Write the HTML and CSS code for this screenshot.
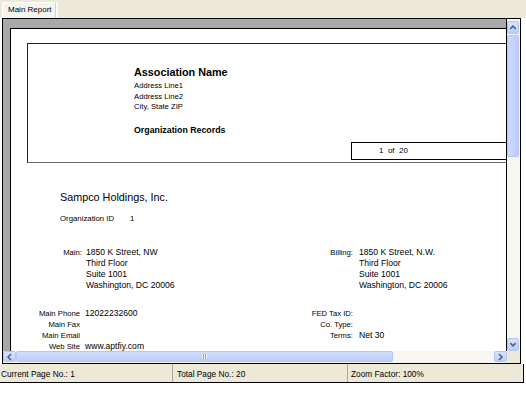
FILE: index.html
```html
<!DOCTYPE html>
<html>
<head>
<meta charset="utf-8">
<link rel="stylesheet" href="styles.css">
</head>
<body>
<div class="app">
  <div class="tabbar"><div class="tab">Main Report</div></div>
  <div class="frame">
    <div class="viewport">
      <div class="page">
        <div class="hdrbox">
          <div class="org-block">
            <div class="assoc">Association Name</div>
            <div class="addr first">Address Line1</div>
            <div class="addr">Address Line2</div>
            <div class="addr">City, State ZIP</div>
            <div class="records">Organization Records</div>
          </div>
          <div class="pager">1  of  20</div>
        </div>
        <div class="company">Sampco Holdings, Inc.</div>
        <div class="orgid"><span class="orgid-label">Organization ID</span><span>1</span></div>
        <div class="addr-grid">
          <div class="lbl">Main:</div>
          <div class="val">1850 K Street, NW<br>Third Floor<br>Suite 1001<br>Washington, DC  20006</div>
          <div class="lbl">Billing:</div>
          <div class="val val-r">1850 K Street, N.W.<br>Third Floor<br>Suite 1001<br>Washington, DC  20006</div>
        </div>
        <div class="contact-grid">
          <div class="lbl">Main Phone</div><div class="val">12022232600</div><div class="lbl">FED Tax ID:</div><div class="val"></div>
          <div class="lbl">Main Fax</div><div class="val"></div><div class="lbl">Co. Type:</div><div class="val"></div>
          <div class="lbl">Main Email</div><div class="val"></div><div class="lbl">Terms:</div><div class="val val-r">Net 30</div>
          <div class="lbl">Web Site</div><div class="val">www.aptfiy.com</div><div class="lbl"></div><div class="val"></div>
        </div>
      </div>
    </div>
    <div class="vscroll">
      <div class="sbtn vbtn up"><svg width="11" height="11" viewBox="0 0 11 11"><path d="M2.5 7 L5.5 4 L8.5 7" fill="none" stroke="#4d6185" stroke-width="1.6"/></svg></div>
      <div class="vthumb"></div>
      <div class="spacer"></div>
      <div class="sbtn vbtn down"><svg width="11" height="11" viewBox="0 0 11 11"><path d="M2.5 4 L5.5 7 L8.5 4" fill="none" stroke="#4d6185" stroke-width="1.6"/></svg></div>
    </div>
    <div class="hscroll">
      <div class="sbtn hbtn"><svg width="11" height="10" viewBox="0 0 11 10"><path d="M7 2 L4 5 L7 8" fill="none" stroke="#4d6185" stroke-width="1.6"/></svg></div>
      <div class="hthumb"><span class="grip"></span></div>
      <div class="spacer"></div>
      <div class="sbtn hbtn"><svg width="11" height="10" viewBox="0 0 11 10"><path d="M4 2 L7 5 L4 8" fill="none" stroke="#4d6185" stroke-width="1.6"/></svg></div>
    </div>
    <div class="corner"></div>
  </div>
  <div class="statusbar">
    <div class="cell c1">Current Page No.: 1</div>
    <div class="cell c2">Total Page No.: 20</div>
    <div class="cell c3">Zoom Factor: 100%</div>
  </div>
</div>
</body>
</html>
```
FILE: styles.css
```css
* { box-sizing: border-box; }
html, body { margin: 0; padding: 0; background: #fff; }
body { font-family: "Liberation Sans", Arial, sans-serif; color: #000; }

.app { width: 526px; height: 396px; background: #fff; }

.tabbar {
  height: 18px;
  background: #ece9d8;
  padding: 2px 0 0 2px;
  display: flex;
}
.tab {
  height: 16px;
  padding: 0 5px 0 5px;
  width: 54px;
  background: #f5f4ef;
  border-top: 1px solid #fff;
  border-left: 1px solid #fff;
  border-right: 1px solid #d6d2c2;
  box-shadow: 2px 0 0 #fbfaf6;
  font-size: 8px;
  line-height: 14px;
  white-space: nowrap;
}

.frame {
  margin-left: 2px;
  width: 519px;
  border: 1px solid #000;
  display: grid;
  grid-template-columns: 504px 13px;
  grid-template-rows: 332px 12px;
  background: #ece9d8;
}

.viewport {
  background: #a9a9a9;
  border-right: 1px solid #000;
  overflow: hidden;
  padding: 9px 0 0 7px;
}
.page {
  width: 600px;
  height: 400px;
  background: #fff;
  border-top: 1px solid #000;
  border-left: 1px solid #000;
  padding-top: 14px;
}

.hdrbox {
  margin-left: 16px;
  width: 520px;
  height: 120px;
  border: 1px solid #222;
  border-bottom-color: #6e6e6e;
}
.org-block { padding: 21px 0 0 106px; }
.assoc { font-size: 10.8px; font-weight: bold; line-height: 14px; }
.addr { font-size: 7.7px; line-height: 10.5px; }
.addr.first { margin-top: 2px; }
.records { font-size: 8.8px; font-weight: bold; line-height: 12px; margin-top: 11.5px; }
.pager {
  margin: 6px 0 0 323px;
  width: 200px;
  height: 18px;
  border: 1px solid #000;
  font-size: 8px;
  line-height: 16px;
  padding-left: 27px;
  white-space: pre;
}

.company { margin: 27px 0 0 49px; font-size: 10.8px; line-height: 14px; }
.orgid { margin: 8.5px 0 0 49px; font-size: 7.8px; line-height: 11px; display: flex; }
.orgid-label { width: 70px; }

.addr-grid {
  margin-top: 23px;
  display: grid;
  grid-template-columns: 71px 203px 60px 150px;
  column-gap: 4px;
  line-height: 11px;
}
.contact-grid {
  margin-top: 17px;
  display: grid;
  grid-template-columns: 69px 203px 60px 150px;
  column-gap: 5px;
  line-height: 11px;
}
.lbl { text-align: right; font-size: 7.7px; white-space: nowrap; }
.val { font-size: 8.6px; white-space: pre-line; }
.addr-grid .val { white-space: normal; }
.val-r { padding-left: 2px; }
.contact-grid .val-r { padding-left: 1px; }

/* scrollbars */
.vscroll {
  background: #f7f6f1;
  display: flex;
  flex-direction: column;
  padding: 2px 1px 0 0;
}
.sbtn {
  background: linear-gradient(#d7e3fd, #bccdf6);
  border: 1px solid #b4c7f2;
  border-radius: 2px;
  display: flex;
  align-items: center;
  justify-content: center;
}
.vbtn { height: 13px; width: 12px; }
.vthumb {
  margin-top: 1px;
  height: 122px;
  width: 12px;
  background: linear-gradient(90deg, #cbd9fc, #bccdf7);
  border: 1px solid #b4c7f2;
  border-radius: 2px;
}
.spacer { flex: 1; }

.hscroll {
  background: #f7f6f1;
  display: flex;
  padding: 0 0 1px 0;
}
.hbtn { width: 13px; height: 11px; }
.hthumb {
  width: 377px;
  height: 11px;
  background: linear-gradient(#cfdcfc, #bdcef7);
  border: 1px solid #b4c7f2;
  border-radius: 2px;
  display: flex;
  align-items: center;
  justify-content: center;
}
.grip {
  width: 5px;
  height: 5px;
  background: repeating-linear-gradient(90deg, #eef3fe 0 1px, #8ca6dc 1px 2px);
}
.corner { background: #ece9d8; }

.statusbar {
  width: 524px;
  height: 19px;
  background: #ece9d8;
  border-right: 1px solid #000;
  border-bottom: 1px solid #000;
  display: flex;
  font-size: 8.3px;
  line-height: 15px;
}
.cell { white-space: nowrap; padding-top: 3px; }
.c1 { width: 173px; padding-left: 1px; border-right: 1px solid #aca899; }
.c2 { width: 175px; padding-left: 4px; border-right: 1px solid #aca899; }
.c3 { flex: 1; padding-left: 3px; }
```
